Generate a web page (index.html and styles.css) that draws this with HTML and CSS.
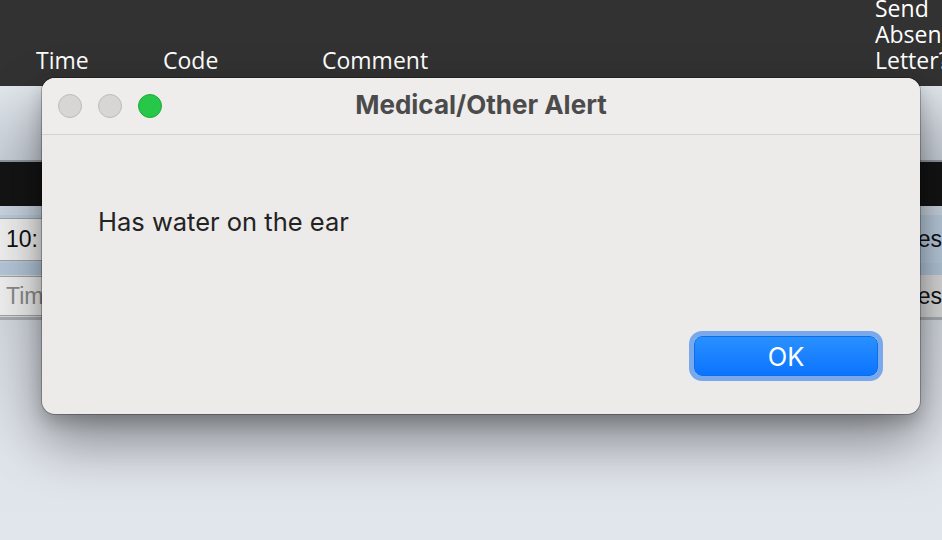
FILE: index.html
```html
<!DOCTYPE html>
<html>
<head>
<meta charset="utf-8">
<link rel="stylesheet" href="styles.css">
</head>
<body>
<div class="app">
  <header class="cols">
    <div class="col col-time">Time</div>
    <div class="col col-code">Code</div>
    <div class="col col-comment">Comment</div>
    <div class="col col-send">Send<br>Absence<br>Letter?</div>
  </header>
  <div class="toolbar"></div>
  <div class="band"></div>
  <div class="strip"></div>
  <div class="row row-selected">
    <div class="field">10:</div>
    <div class="cell">Yes</div>
  </div>
  <div class="strip strip-blue"></div>
  <div class="row row-plain">
    <div class="field field-empty">Time</div>
    <div class="cell">Yes</div>
  </div>
  <div class="rule"></div>
  <div class="backdrop"></div>
</div>

<div class="dialog">
  <div class="titlebar">
    <div class="lights">
      <span class="light"></span>
      <span class="light"></span>
      <span class="light light-green"></span>
    </div>
    <div class="title">Medical/Other Alert</div>
  </div>
  <div class="content">
    <p class="message">Has water on the ear</p>
    <div class="actions">
      <button class="ok">OK</button>
    </div>
  </div>
</div>
</body>
</html>
```
FILE: styles.css
```css
html, body {
  margin: 0;
  padding: 0;
}
body {
  width: 942px;
  height: 540px;
  overflow: hidden;
  position: relative;
  background: #dde1e8;
  font-family: "Open Sans", "DejaVu Sans", sans-serif;
}
.app {
  display: flex;
  flex-direction: column;
  height: 540px;
}
.cols {
  height: 86px;
  box-sizing: border-box;
  background: #323232;
  color: #ffffff;
  display: grid;
  grid-template-columns: 127px 159px 553px 1fr;
  align-items: end;
  padding: 0 0 13px 36px;
  font-size: 23px;
  line-height: 26px;
  overflow: hidden;
  white-space: nowrap;
}
.col-send {
  overflow: hidden;
}
.toolbar {
  height: 74px;
  background: linear-gradient(#e1e6ec, #c7ced6);
  border-bottom: 2px solid #8f959c;
}
.band {
  height: 44px;
  background: #141414;
}
.strip {
  height: 9px;
  background: #c8d3de;
}
.strip-blue {
  height: 12px;
  background: #b3c6d9;
}
.row {
  height: 48px;
  display: grid;
  grid-template-columns: 1fr auto;
  align-items: center;
  font-family: "Liberation Sans", Arial, sans-serif;
  font-size: 23px;
}
.row-selected {
  background: #b8cadc;
}
.row-plain {
  height: 42px;
  background: #d9d9d9;
}
.field {
  width: 200px;
  height: 43px;
  box-sizing: border-box;
  margin-left: -4px;
  border: 1px solid #a3a3a3;
  border-radius: 4px;
  background: #efefef;
  padding-left: 9px;
  display: flex;
  align-items: center;
  color: #111;
}
.field-empty {
  height: 40px;
  color: #8a8a8a;
}
.cell {
  color: #111;
  text-align: right;
}
.rule {
  height: 3px;
  background: #a8acb1;
}
.backdrop {
  flex: 1;
  background: linear-gradient(#d3d8df, #dfe3ea 60%, #e1e5ec);
}

/* dialog */
.dialog {
  position: absolute;
  left: 42px;
  top: 78px;
  width: 878px;
  height: 336px;
  border-radius: 13px;
  background: #ecebe9;
  box-shadow: 0 0 0 1px rgba(0,0,0,0.25), 0 26px 55px rgba(0,0,0,0.42), 0 8px 16px rgba(0,0,0,0.18);
  display: flex;
  flex-direction: column;
  overflow: hidden;
  font-family: Inter, "Open Sans", sans-serif;
}
.titlebar {
  height: 56px;
  flex: none;
  background: #eeedeb;
  border-bottom: 1px solid #d3d2d0;
  display: grid;
  grid-template-columns: 1fr;
  align-items: center;
  position: relative;
}
.lights {
  position: absolute;
  left: 16px;
  top: 16px;
  display: flex;
  gap: 16px;
}
.light {
  width: 22px;
  height: 22px;
  border-radius: 50%;
  background: #d7d6d4;
  border: 1px solid #bdbcba;
}
.light-green {
  background: #27c74a;
  border-color: #1eaa3a;
}
.title {
  text-align: center;
  font-size: 26px;
  line-height: 30px;
  font-weight: 700;
  color: #4b4b4b;
  margin-top: -3px;
}
.content {
  flex: 1;
  display: flex;
  flex-direction: column;
  padding: 71px 42px 38px 56px;
}
.message {
  margin: 0;
  font-size: 25.5px;
  line-height: 32px;
  color: #232323;
}
.actions {
  margin-top: auto;
  display: flex;
  justify-content: flex-end;
}
.ok {
  width: 184px;
  height: 40px;
  border: 1px solid #0d6fe6;
  border-radius: 8px;
  background: linear-gradient(#2a90ff, #0a74ff);
  color: #ffffff;
  font-family: Inter, "Open Sans", sans-serif;
  font-size: 25.5px;
  box-shadow: 0 0 0 5px #78a9ec;
  padding: 0;
}
```
